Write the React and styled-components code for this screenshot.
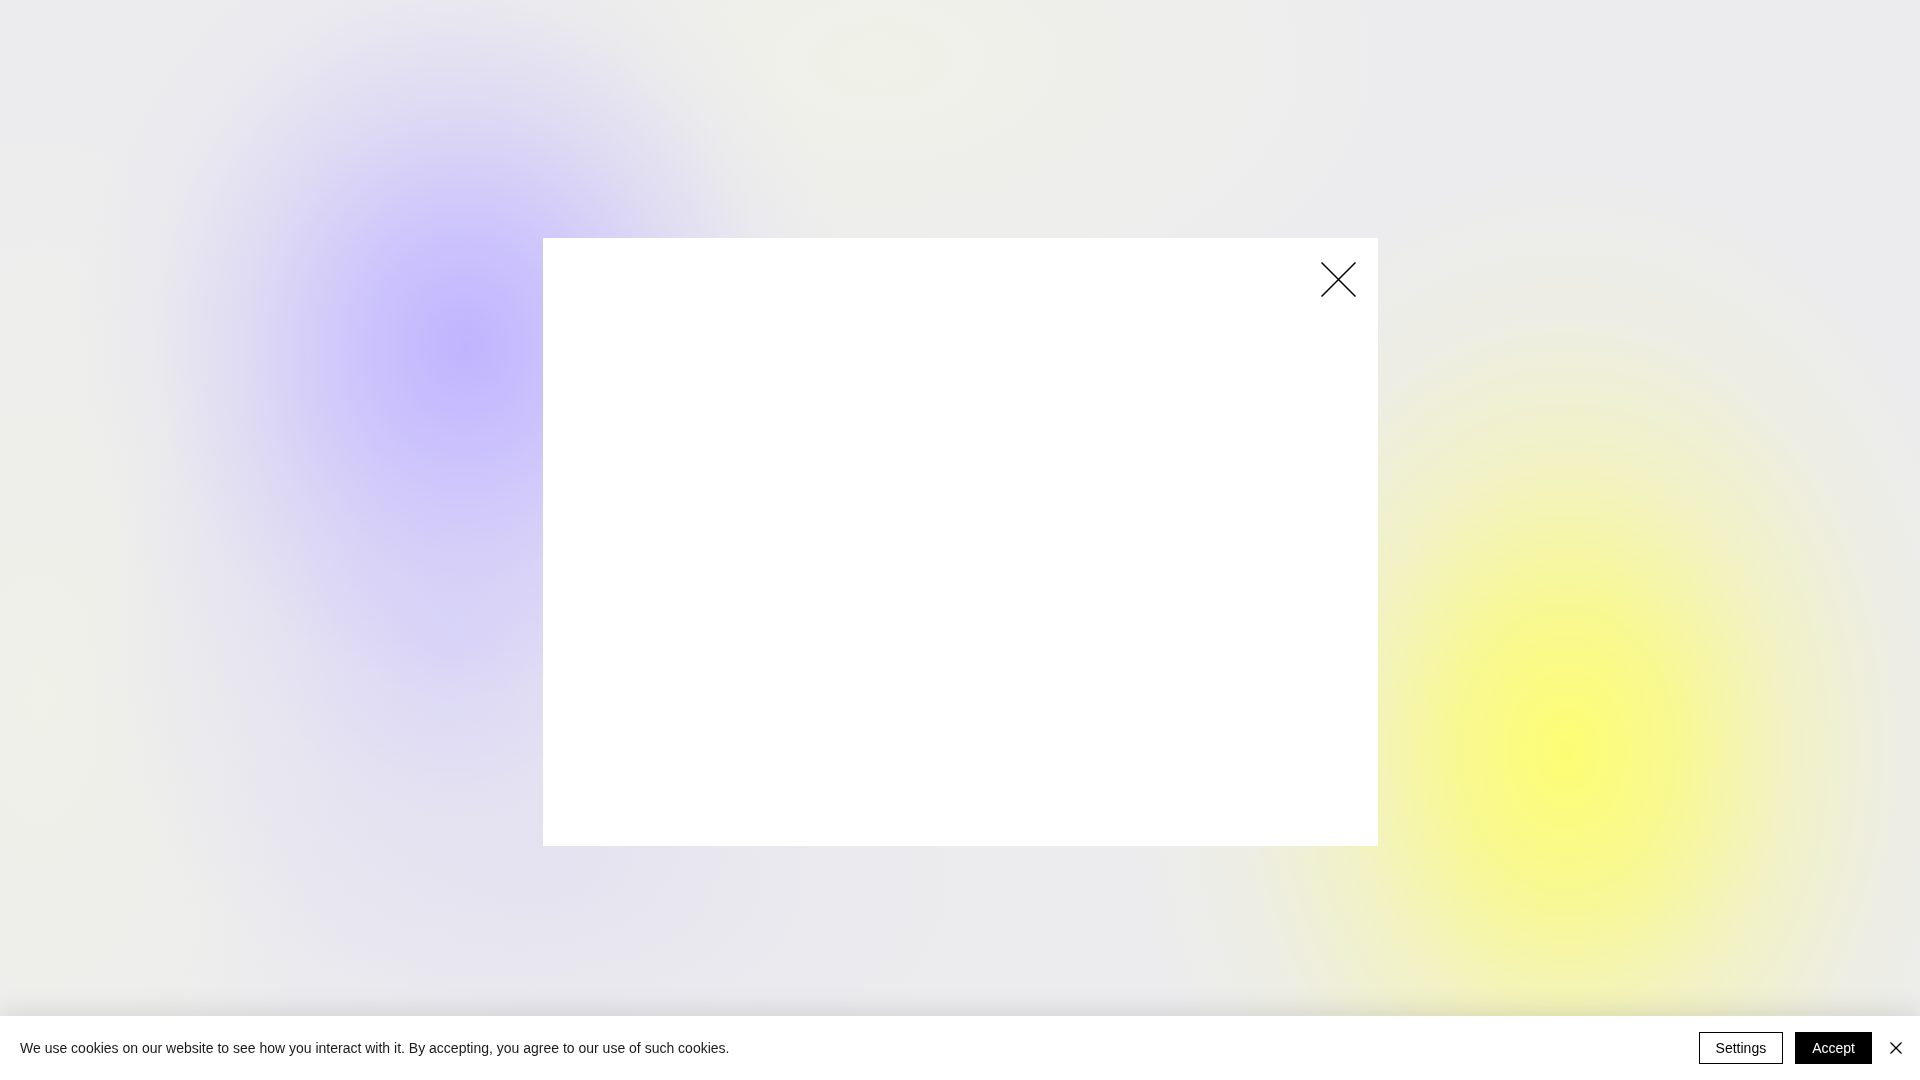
import React from "react";
import styled, { createGlobalStyle } from "styled-components";

const GlobalStyle = createGlobalStyle`
  html, body {
    margin: 0;
    padding: 0;
    height: 100%;
  }
  body {
    font-family: "Liberation Sans", Arial, sans-serif;
    overflow: hidden;
  }
  * {
    box-sizing: border-box;
  }
`;

const Page = styled.div`
  width: 100vw;
  height: 100vh;
  display: grid;
  place-items: center;
  padding-top: 4px;
  background-color: #ececee;
  background-image:
    radial-gradient(ellipse 390px 440px at 465px 345px, rgba(192, 180, 255, 1) 0%, rgba(198, 188, 255, 0.85) 25%, rgba(208, 200, 250, 0.5) 55%, rgba(222, 218, 244, 0.2) 80%, rgba(236, 236, 238, 0) 100%),
    radial-gradient(ellipse 360px 360px at 450px 640px, rgba(212, 206, 250, 0.75) 0%, rgba(222, 218, 244, 0.4) 50%, rgba(236, 236, 238, 0) 100%),
    radial-gradient(ellipse 440px 580px at 1567px 750px, rgba(253, 253, 115, 1) 0%, rgba(250, 250, 132, 0.88) 24%, rgba(246, 246, 168, 0.58) 50%, rgba(240, 240, 205, 0.3) 75%, rgba(236, 236, 238, 0) 100%),
    radial-gradient(ellipse 520px 300px at 880px 60px, rgba(240, 242, 232, 0.9) 0%, rgba(236, 236, 238, 0) 100%),
    radial-gradient(ellipse 300px 600px at 40px 700px, rgba(240, 241, 232, 0.9) 0%, rgba(236, 236, 238, 0) 100%),
    radial-gradient(ellipse 420px 240px at 560px 880px, rgba(228, 226, 240, 0.7) 0%, rgba(236, 236, 238, 0) 100%);
`;

const Modal = styled.div`
  position: relative;
  width: 835px;
  height: 608px;
  background: #ffffff;
`;

const CloseButton = styled.button`
  position: absolute;
  top: 22px;
  right: 20px;
  width: 39px;
  height: 39px;
  padding: 0;
  border: none;
  background: transparent;
  cursor: pointer;
  display: flex;
  align-items: center;
  justify-content: center;
`;

const CookieBar = styled.div`
  position: fixed;
  left: 0;
  right: 0;
  bottom: 0;
  height: 64px;
  background: #ffffff;
  box-shadow: 0 -2px 28px rgba(0, 0, 0, 0.12);
  display: flex;
  align-items: center;
  justify-content: space-between;
  padding: 0 14px 0 20px;
`;

const CookieText = styled.p`
  margin: 0;
  font-size: 14px;
  color: #1a1a1a;
`;

const Actions = styled.div`
  display: flex;
  align-items: center;
  gap: 12px;
`;

const ActionButton = styled.button`
  height: 32px;
  padding: 0 16px;
  font-family: "Liberation Sans", Arial, sans-serif;
  font-size: 14px;
  border: 1px solid #000;
  background: ${(props) => (props.primary ? "#000" : "#fff")};
  color: ${(props) => (props.primary ? "#fff" : "#000")};
  cursor: pointer;
`;

const DismissButton = styled.button`
  width: 20px;
  height: 20px;
  margin-left: 2px;
  padding: 0;
  border: none;
  background: transparent;
  display: flex;
  align-items: center;
  justify-content: center;
  cursor: pointer;
`;

const CrossIcon = ({ size, stroke }) => (
  <svg width={size} height={size} viewBox={`0 0 ${size} ${size}`} fill="none">
    <line x1="0.5" y1="0.5" x2={size - 0.5} y2={size - 0.5} stroke="#000" strokeWidth={stroke} />
    <line x1={size - 0.5} y1="0.5" x2="0.5" y2={size - 0.5} stroke="#000" strokeWidth={stroke} />
  </svg>
);

const App = () => {
  return (
    <>
      <GlobalStyle />
      <Page>
        <Modal>
          <CloseButton aria-label="Close">
            <CrossIcon size={35} stroke={1.5} />
          </CloseButton>
        </Modal>
      </Page>
      <CookieBar>
        <CookieText>
          We use cookies on our website to see how you interact with it. By accepting, you agree to our use of such cookies.
        </CookieText>
        <Actions>
          <ActionButton>Settings</ActionButton>
          <ActionButton primary>Accept</ActionButton>
          <DismissButton aria-label="Close">
            <CrossIcon size={12} stroke={1.3} />
          </DismissButton>
        </Actions>
      </CookieBar>
    </>
  );
};

export default App;
